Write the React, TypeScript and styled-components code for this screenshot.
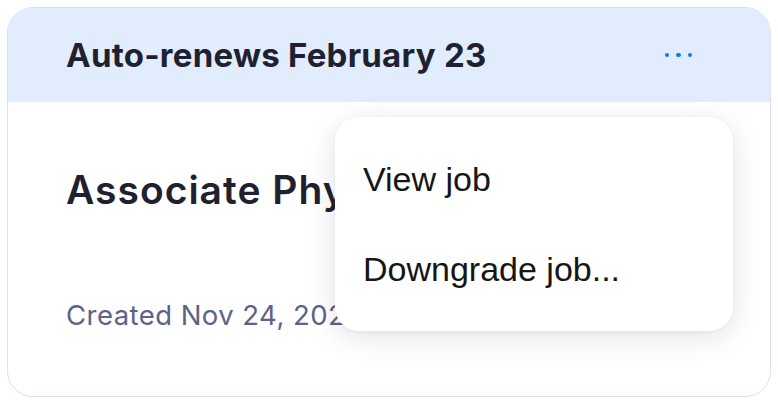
import React from "react";
import styled, { createGlobalStyle } from "styled-components";

const Global = createGlobalStyle`
  html, body { margin: 0; padding: 0; background: #ffffff; }
  body { font-family: Inter, "Noto Sans", sans-serif; }
`;

const Page = styled.div`
  padding: 7px;
  width: 778px;
  height: 408px;
  box-sizing: border-box;
`;

const Card = styled.div`
  position: relative;
  width: 764px;
  height: 390px;
  box-sizing: border-box;
  border: 1.5px solid #dedff3;
  border-radius: 26px;
  background: #ffffff;
  display: flex;
  flex-direction: column;
`;

const Header = styled.div`
  height: 94px;
  flex: none;
  background: #e1edfd;
  border-radius: 25px 25px 0 0;
  display: flex;
  align-items: center;
  justify-content: space-between;
  padding: 0 78px 0 58px;
`;

const Title = styled.h2`
  margin: 0;
  font-family: Inter, sans-serif;
  font-size: 33px;
  font-weight: 700;
  color: #1f2131;
  letter-spacing: 0.25px;
`;

const Dots = styled.button`
  border: 0;
  background: transparent;
  padding: 0;
  display: flex;
  gap: 7px;
`;

const Dot = styled.span`
  width: 4.5px;
  height: 4.5px;
  border-radius: 50%;
  background: #0b7cf0;
`;

const Body = styled.div`
  padding: 66px 58px 0;
  display: flex;
  flex-direction: column;
`;

const JobTitle = styled.div`
  font-family: Inter, sans-serif;
  font-size: 39px;
  font-weight: 600;
  letter-spacing: 1px;
  color: #1f2131;
  line-height: 44px;
  white-space: nowrap;
`;

const Meta = styled.div`
  margin-top: 88px;
  font-family: Inter, sans-serif;
  font-size: 27.5px;
  font-weight: 400;
  letter-spacing: 0.45px;
  color: #5d6287;
  line-height: 30px;
  white-space: nowrap;
`;

const Menu = styled.div`
  position: absolute;
  left: 327px;
  top: 109px;
  width: 398px;
  height: 214px;
  box-sizing: border-box;
  background: #ffffff;
  border-radius: 24px;
  box-shadow: 0 6px 28px rgba(20, 24, 60, 0.12), 0 1px 4px rgba(20, 24, 60, 0.04);
  display: flex;
  flex-direction: column;
  padding: 43px 28px 0;
  gap: 52px;
`;

const MenuItem = styled.div`
  font-family: "Liberation Sans", Arial, sans-serif;
  font-size: 34px;
  color: #161616;
  line-height: 38px;
`;

export default function App() {
  return (
    <>
      <Global />
      <Page>
        <Card>
          <Header>
            <Title>Auto-renews February 23</Title>
            <Dots aria-label="More">
              <Dot />
              <Dot />
              <Dot />
            </Dots>
          </Header>
          <Body>
            <JobTitle>Associate Physician Assistant</JobTitle>
            <Meta>Created Nov 24, 2023</Meta>
          </Body>
          <Menu>
            <MenuItem>View job</MenuItem>
            <MenuItem>Downgrade job...</MenuItem>
          </Menu>
        </Card>
      </Page>
    </>
  );
}
